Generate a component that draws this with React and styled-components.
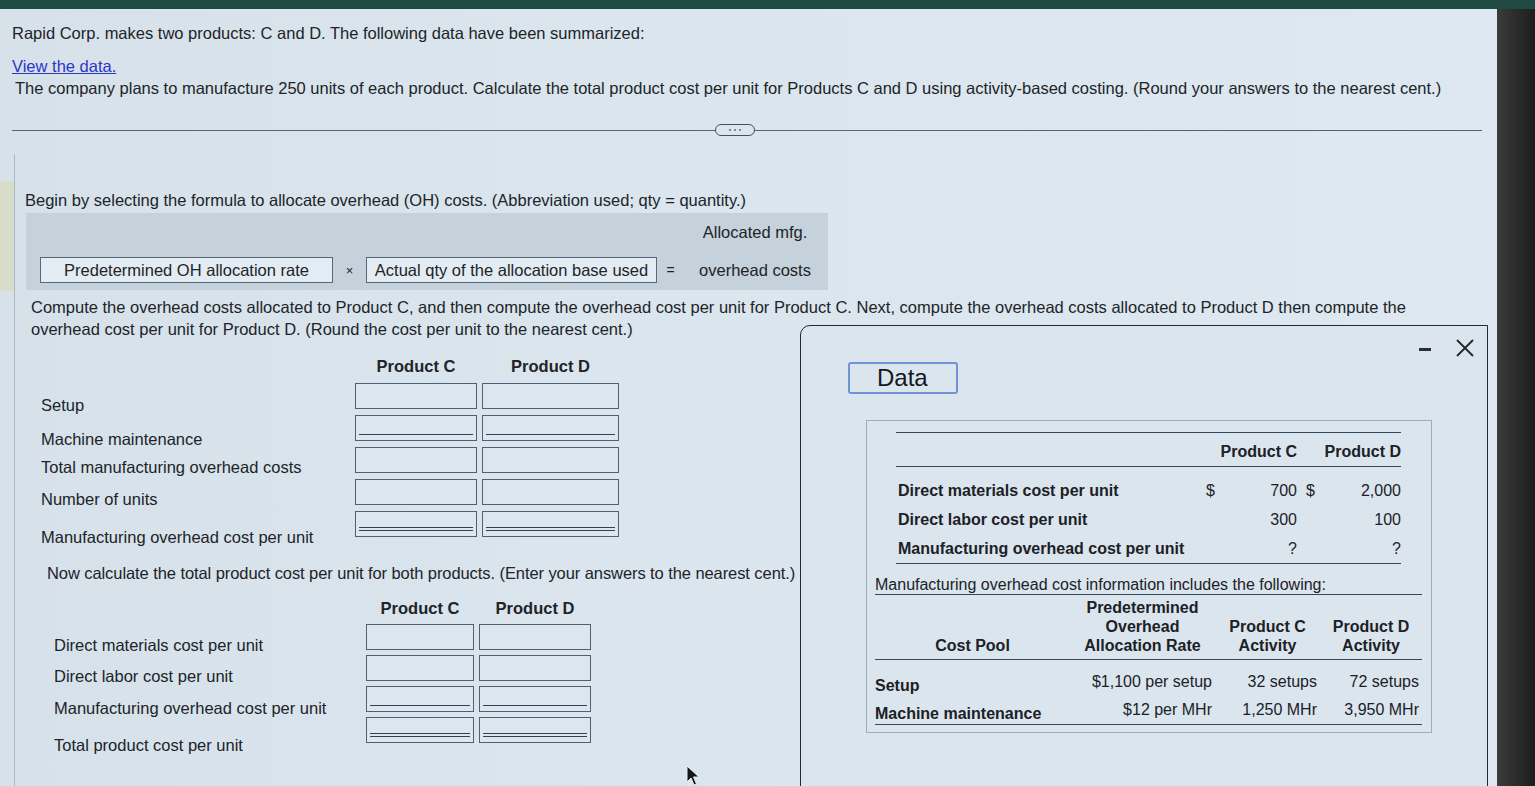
import React from "react";
import styled, { createGlobalStyle } from "styled-components";

const GlobalStyle = createGlobalStyle`
  html, body {
    margin: 0;
    padding: 0;
    background: #1b1b1b;
  }
  body {
    font-family: "Liberation Sans", Arial, sans-serif;
    color: #202428;
  }
`;

const Screen = styled.div`
  width: 1535px;
  height: 786px;
  overflow: hidden;
  display: flex;
  flex-direction: column;
`;

const TopBar = styled.div`
  height: 9px;
  flex-shrink: 0;
  background: #1e4a43;
`;

const Body = styled.div`
  flex: 1;
  display: flex;
  min-height: 0;
`;

const Sheet = styled.div`
  position: relative;
  width: 1497px;
  flex-shrink: 0;
  display: flex;
  flex-direction: column;
  background: linear-gradient(90deg, #d6e1ea 0%, #dae5ee 40%, #dde8f0 100%);
`;

const Edge = styled.div`
  flex: 1;
  background: linear-gradient(90deg, #3a3b3b, #1d1d1d);
`;

const Intro = styled.div`
  padding: 14px 0 0 12px;
  font-size: 16.5px;
  line-height: 20px;
`;

const Line = styled.p`
  margin: 0 0 ${(p) => p.$gap || 0}px;
  padding-left: ${(p) => p.$indent || 0}px;
`;

const DataLink = styled.a`
  color: #2a37c4;
  text-decoration: underline;
  cursor: pointer;
`;

const Divider = styled.div`
  display: flex;
  align-items: center;
  margin: 26px 15px 0 12px;
`;

const Rule = styled.div`
  height: 1px;
  background: #4f6578;
  flex: ${(p) => (p.$width ? `0 0 ${p.$width}px` : 1)};
`;

const Pill = styled.div`
  width: 38px;
  height: 10px;
  border: 1.5px solid #3c5365;
  border-radius: 7px;
  display: flex;
  align-items: center;
  justify-content: center;
  gap: 3px;
  span {
    width: 2px;
    height: 2px;
    border-radius: 50%;
    background: #5b7080;
  }
`;

const Question = styled.div`
  flex: 1;
  display: flex;
  margin-top: 18px;
`;

const Rail = styled.div`
  width: 14px;
  flex-shrink: 0;
  border-right: 1px solid #a8b8c4;
  background: linear-gradient(
    180deg,
    transparent 0px,
    transparent 27px,
    #d8dcc8 27px,
    #d8dcc8 137px,
    transparent 137px
  );
`;

const Content = styled.div`
  flex: 1;
  padding-top: 36px;
  font-size: 16.5px;
`;

const Prompt = styled.p`
  margin: ${(p) => p.$top || 0}px 0 0 ${(p) => p.$left || 0}px;
  line-height: ${(p) => p.$lh || 20}px;
  letter-spacing: ${(p) => p.$track || 0}px;
  white-space: nowrap;
`;

const FormulaBox = styled.div`
  margin: 3px 0 0 11px;
  width: 802px;
  box-sizing: border-box;
  padding: 9px 0 7px 14px;
  background: #c5d2dc;
  display: grid;
  grid-template-columns: 293px 33px 291px 27px 142px;
  grid-template-rows: 20px 26px;
  row-gap: 15px;
  align-items: center;
`;

const FormulaField = styled.div`
  grid-row: 2;
  height: 26px;
  box-sizing: border-box;
  border: 1px solid #56697a;
  background: #e3ecf3;
  display: flex;
  align-items: center;
  justify-content: center;
  white-space: nowrap;
`;

const Operator = styled.span`
  grid-row: 2;
  text-align: center;
  font-size: ${(p) => p.$size || 13}px;
`;

const ResultText = styled.span`
  grid-row: ${(p) => p.$row};
  grid-column: 5;
  text-align: center;
`;

const EntryGrid = styled.div`
  margin: ${(p) => p.$top}px 0 0 ${(p) => p.$left}px;
  display: grid;
  grid-template-columns: ${(p) => p.$cols};
  column-gap: 5px;
  row-gap: ${(p) => p.$rowGap}px;
  align-items: start;
`;

const ColHead = styled.div`
  font-weight: bold;
  text-align: center;
  line-height: 18px;
  margin-bottom: 2px;
`;

const RowLabel = styled.div`
  height: 26px;
  box-sizing: border-box;
  padding-top: ${(p) => p.$drop}px;
  line-height: 20px;
  white-space: nowrap;
`;

const Field = styled.div`
  position: relative;
  height: 26px;
  box-sizing: border-box;
  border: 1.5px solid #4b6176;
  background: #dbe6ef;
  &::after {
    content: "";
    position: absolute;
    left: 3px;
    right: 3px;
    bottom: 5px;
    display: ${(p) => (p.$rule ? "block" : "none")};
    height: ${(p) => (p.$rule === "double" ? "2px" : "0")};
    border-top: 1.5px solid #2f4252;
    border-bottom: ${(p) => (p.$rule === "double" ? "1.5px solid #2f4252" : "none")};
  }
`;

const Dialog = styled.div`
  position: absolute;
  left: 800px;
  top: 316px;
  width: 688px;
  height: 490px;
  box-sizing: border-box;
  border: 1.5px solid #1f2b35;
  border-right-width: 1px;
  border-top-left-radius: 10px;
  background: #dae5ee;
  padding: 36px 0 0 47px;
`;

const Controls = styled.div`
  position: absolute;
  top: 12px;
  right: 12px;
  display: flex;
  align-items: center;
  gap: 24px;
`;

const Minimize = styled.div`
  width: 12px;
  height: 3px;
  background: #2a2e33;
  margin-top: 2px;
`;

const DataTag = styled.div`
  width: 110px;
  height: 32px;
  box-sizing: border-box;
  border: 2.5px solid #6f93d6;
  border-radius: 3px;
  padding-left: 27px;
  font-size: 24px;
  line-height: 28px;
  color: #14181c;
`;

const DataPanel = styled.div`
  margin: 26px 0 0 18px;
  width: 566px;
  height: 313px;
  box-sizing: border-box;
  border: 1px solid #9eacb7;
  padding: 11px 0 0 8px;
  font-size: 16px;
  font-weight: bold;
  color: #1c2126;
`;

const CostTable = styled.div`
  margin-left: 21px;
  width: 505px;
  display: grid;
  grid-template-columns: 1fr 16px 82px 18px 86px;
  border-top: 1.5px solid #33475a;
  border-bottom: 1.5px solid #33475a;
`;

const HeadCell = styled.div`
  grid-column: ${(p) => p.$span};
  text-align: right;
  padding: 10px 0 6px;
  line-height: 17px;
  border-bottom: 1.5px solid #33475a;
`;

const Cell = styled.div`
  height: 29px;
  line-height: 29px;
  text-align: ${(p) => p.$align || "left"};
  font-weight: ${(p) => (p.$plain ? "normal" : "bold")};
  padding-top: ${(p) => (p.$first ? 9 : 0)}px;
  padding-left: ${(p) => p.$padLeft || 0}px;
  white-space: nowrap;
`;

const Caption = styled.div`
  margin-top: 12px;
  width: 547px;
  font-weight: normal;
  line-height: 18px;
  white-space: nowrap;
  border-bottom: 1px solid #33475a;
`;

const PoolTable = styled.div`
  width: 547px;
  display: grid;
  grid-template-columns: 195px 145px 105px 102px;
  border-bottom: 1.5px solid #33475a;
`;

const PoolHead = styled.div`
  align-self: end;
  text-align: center;
  line-height: 19px;
  padding: 3px 0 4px;
  border-bottom: 1.5px solid #33475a;
`;

const PoolCell = styled.div`
  height: 28px;
  line-height: 28px;
  margin-top: ${(p) => (p.$first ? 8 : 0)}px;
  text-align: ${(p) => (p.$label ? "left" : "right")};
  padding-right: ${(p) => (p.$label ? 0 : 3)}px;
  padding-top: ${(p) => (p.$label ? 4 : 0)}px;
  box-sizing: border-box;
  font-weight: ${(p) => (p.$label ? "bold" : "normal")};
  white-space: nowrap;
`;

const Pointer = styled.svg`
  position: absolute;
  left: 686px;
  top: 756px;
`;

const overheadRows = [
  { label: "Setup", drop: 12 },
  { label: "Machine maintenance", rule: "single", drop: 14 },
  { label: "Total manufacturing overhead costs", drop: 10 },
  { label: "Number of units", drop: 10 },
  { label: "Manufacturing overhead cost per unit", rule: "double", drop: 16 },
];

const productRows = [
  { label: "Direct materials cost per unit", drop: 11 },
  { label: "Direct labor cost per unit", drop: 11 },
  { label: "Manufacturing overhead cost per unit", rule: "single", drop: 12 },
  { label: "Total product cost per unit", rule: "double", drop: 18 },
];

const costRows = [
  { label: "Direct materials cost per unit", cSign: "$", c: "700", dSign: "$", d: "2,000" },
  { label: "Direct labor cost per unit", c: "300", d: "100" },
  { label: "Manufacturing overhead cost per unit", c: "?", d: "?" },
];

const pools = [
  { name: "Setup", rate: "$1,100 per setup", c: "32 setups", d: "72 setups" },
  { name: "Machine maintenance", rate: "$12 per MHr", c: "1,250 MHr", d: "3,950 MHr" },
];

const Entry = ({ rows, top, left, cols, rowGap }) => (
  <EntryGrid $top={top} $left={left} $cols={cols} $rowGap={rowGap}>
    <div />
    <ColHead>Product C</ColHead>
    <ColHead>Product D</ColHead>
    {rows.map((r) => (
      <React.Fragment key={r.label}>
        <RowLabel $drop={r.drop}>{r.label}</RowLabel>
        <Field $rule={r.rule} />
        <Field $rule={r.rule} />
      </React.Fragment>
    ))}
  </EntryGrid>
);

export default function App() {
  return (
    <>
      <GlobalStyle />
      <Screen>
        <TopBar />
        <Body>
          <Sheet>
            <Intro>
              <Line $gap={13}>
                Rapid Corp. makes two products: C and D. The following data have been summarized:
              </Line>
              <Line $gap={2}>
                <DataLink>View the data.</DataLink>
              </Line>
              <Line $indent={3}>
                The company plans to manufacture 250 units of each product. Calculate the total product
                cost per unit for Products C and D using activity-based costing. (Round your answers to
                the nearest cent.)
              </Line>
            </Intro>

            <Divider>
              <Rule $width={703} />
              <Pill>
                <span />
                <span />
                <span />
              </Pill>
              <Rule />
            </Divider>

            <Question>
              <Rail />
              <Content>
                <Prompt $left={10}>
                  Begin by selecting the formula to allocate overhead (OH) costs. (Abbreviation used; qty = quantity.)
                </Prompt>
                <FormulaBox>
                  <ResultText $row={1}>Allocated mfg.</ResultText>
                  <FormulaField>Predetermined OH allocation rate</FormulaField>
                  <Operator>×</Operator>
                  <FormulaField>Actual qty of the allocation base used</FormulaField>
                  <Operator $size={14}>=</Operator>
                  <ResultText $row={2}>overhead costs</ResultText>
                </FormulaBox>
                <Prompt $top={6} $left={16} $lh={22}>
                  Compute the overhead costs allocated to Product C, and then compute the overhead cost per unit for
                  Product C. Next, compute the overhead costs allocated to Product D then compute the
                  <br />
                  overhead cost per unit for Product D. (Round the cost per unit to the nearest cent.)
                </Prompt>
                <Entry rows={overheadRows} top={17} left={26} cols="309px 122px 137px" rowGap={6} />
                <Prompt $top={26} $left={32} $track={-0.08}>
                  Now calculate the total product cost per unit for both products. (Enter your answers to the nearest cent.)
                </Prompt>
                <Entry rows={productRows} top={16} left={39} cols="307px 108px 112px" rowGap={5} />
              </Content>
            </Question>

            <Dialog>
              <Controls>
                <Minimize />
                <svg width="20" height="20" viewBox="0 0 20 20">
                  <path d="M2 2 L18 18 M18 2 L2 18" stroke="#23272b" strokeWidth="1.8" fill="none" />
                </svg>
              </Controls>
              <DataTag>Data</DataTag>
              <DataPanel>
                <CostTable>
                  <HeadCell $span="1" />
                  <HeadCell $span="2 / 4">Product C</HeadCell>
                  <HeadCell $span="4 / 6">Product D</HeadCell>
                  {costRows.map((r, i) => (
                    <React.Fragment key={r.label}>
                      <Cell $first={i === 0} $padLeft={2}>{r.label}</Cell>
                      <Cell $first={i === 0} $plain $align="right">{r.cSign}</Cell>
                      <Cell $first={i === 0} $plain $align="right">{r.c}</Cell>
                      <Cell $first={i === 0} $plain $align="right">{r.dSign}</Cell>
                      <Cell $first={i === 0} $plain $align="right">{r.d}</Cell>
                    </React.Fragment>
                  ))}
                </CostTable>
                <Caption>Manufacturing overhead cost information includes the following:</Caption>
                <PoolTable>
                  <PoolHead>Cost Pool</PoolHead>
                  <PoolHead>
                    Predetermined
                    <br />
                    Overhead
                    <br />
                    Allocation Rate
                  </PoolHead>
                  <PoolHead>
                    Product C
                    <br />
                    Activity
                  </PoolHead>
                  <PoolHead>
                    Product D
                    <br />
                    Activity
                  </PoolHead>
                  {pools.map((p, i) => (
                    <React.Fragment key={p.name}>
                      <PoolCell $label $first={i === 0}>{p.name}</PoolCell>
                      <PoolCell $first={i === 0}>{p.rate}</PoolCell>
                      <PoolCell $first={i === 0}>{p.c}</PoolCell>
                      <PoolCell $first={i === 0}>{p.d}</PoolCell>
                    </React.Fragment>
                  ))}
                </PoolTable>
              </DataPanel>
            </Dialog>

            <Pointer width="14" height="22" viewBox="0 0 14 22">
              <path d="M1 1 L1 17 L5 13 L8 20 L10.5 19 L7.5 12 L13 12 Z" fill="#15181b" stroke="#e6eef4" strokeWidth="1" />
            </Pointer>
          </Sheet>
          <Edge />
        </Body>
      </Screen>
    </>
  );
}
